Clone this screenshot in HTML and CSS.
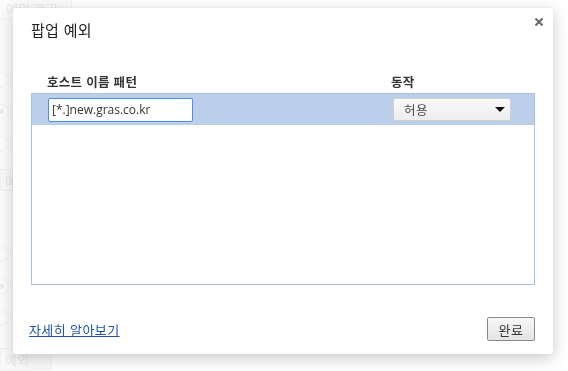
FILE: index.html
```html
<!DOCTYPE html>
<html lang="ko">
<head>
    <meta charset="UTF-8">
    <meta name="viewport" content="width=device-width, initial-scale=1.0">
    <title>팝업 예외</title>
    <link rel="stylesheet" href="styles.css">
</head>
<body>
    <div class="page">
        <div class="page-tab">예외 관리</div>
        <div class="radio-group first">
            <span class="radio"></span>
            <span class="radio checked"></span>
            <span class="radio"></span>
        </div>
        <div class="page-btn">예외</div>
        <div class="radio-group second">
            <span class="radio"></span>
            <span class="radio checked"></span>
            <span class="radio"></span>
        </div>
        <div class="page-btn last">예외</div>
    </div>

    <div class="overlay">
        <div class="dialog">
            <button class="close-btn" aria-label="닫기">
                <svg width="8" height="8" viewBox="0 0 8 8">
                    <path d="M0.5 0.5 L7.5 7.5 M7.5 0.5 L0.5 7.5" stroke="#666" stroke-width="2"/>
                </svg>
            </button>
            <h3 class="dialog-title">팝업 예외</h3>
            <div class="list-head">
                <span class="col-pattern">호스트 이름 패턴</span>
                <span class="col-action">동작</span>
            </div>
            <div class="list">
                <div class="list-row selected">
                    <div class="col-pattern">
                        <input type="text" class="pattern-input" value="[*.]new.gras.co.kr">
                    </div>
                    <div class="col-action">
                        <div class="select">
                            <span>허용</span>
                            <span class="select-arrow"></span>
                        </div>
                    </div>
                </div>
            </div>
            <div class="dialog-footer">
                <a href="#" class="learn-more">자세히 알아보기</a>
                <button class="done-btn">완료</button>
            </div>
        </div>
    </div>
</body>
</html>
```

FILE: styles.css
```css
body {
    margin: 0;
    background: #fff;
    font-family: "Noto Sans CJK KR", "Noto Sans", sans-serif;
    font-size: 12px;
    color: #333;
    overflow: hidden;
}
.page {
    height: 371px;
    color: #cfcfcf;
    background: linear-gradient(to right, #f7f7f7 0, #fff 40px);
}
.page-tab {
    width: 72px;
    height: 20px;
    line-height: 18px;
    padding-left: 6px;
    box-sizing: border-box;
    background: #f6f6f6;
    border-bottom: 1px solid #e6e6e6;
    border-right: 1px solid #e6e6e6;
    font-size: 13px;
}
.radio-group {
    display: flex;
    flex-direction: column;
    gap: 17px;
    margin-left: -6px;
}
.radio-group.first {
    margin-top: 52px;
}
.radio-group.second {
    margin-top: 56px;
}
.radio {
    width: 13px;
    height: 13px;
    border: 1px solid #e2e2e2;
    border-radius: 50%;
    background: #fafafa;
    position: relative;
}
.radio.checked::after {
    content: "";
    position: absolute;
    left: 4px;
    top: 4px;
    width: 5px;
    height: 5px;
    border-radius: 50%;
    background: #d8d8d8;
}
.page-btn {
    width: 52px;
    height: 22px;
    margin-top: 18px;
    line-height: 22px;
    padding-left: 4px;
    box-sizing: border-box;
    border: 1px solid #e2e2e2;
    background: #f6f6f6;
    font-size: 13px;
}
.page-btn.last {
    margin-top: 22px;
}

.overlay {
    position: fixed;
    inset: 0;
    background: rgba(255, 255, 255, 0.55);
}
.dialog {
    position: absolute;
    left: 13px;
    top: 8px;
    width: 540px;
    height: 346px;
    box-sizing: border-box;
    padding: 0 18px 13px;
    background: #fff;
    border-radius: 2px;
    box-shadow: 0 4px 16px rgba(0, 0, 0, 0.22), 0 0 1px rgba(0, 0, 0, 0.15);
    display: flex;
    flex-direction: column;
}
.close-btn {
    position: absolute;
    right: 10px;
    top: 10px;
    width: 8px;
    height: 8px;
    padding: 0;
    border: none;
    background: none;
    display: flex;
}
.dialog-title {
    margin: 12px 0 0;
    font-size: 15px;
    font-weight: normal;
    line-height: 20px;
    color: #222;
    letter-spacing: 0.3px;
}
.list-head {
    display: flex;
    margin-top: 34px;
    line-height: 16px;
    font-weight: bold;
    font-size: 12.5px;
    color: #333;
    letter-spacing: 0.3px;
}
.col-pattern {
    width: 360px;
    padding-left: 16px;
    box-sizing: border-box;
}
.col-action {
    flex: 1;
}
.list {
    margin-top: 3px;
    height: 192px;
    border: 1px solid #a7c3e3;
    box-sizing: border-box;
}
.list-row {
    display: flex;
    align-items: center;
    height: 31px;
}
.list-row.selected {
    background: #bccfea;
}
.list-row .col-pattern {
    padding-left: 16px;
}
.pattern-input {
    width: 145px;
    height: 24px;
    box-sizing: border-box;
    border: 1px solid #4d8fe6;
    border-radius: 2px;
    padding: 0 3px;
    font-family: "Open Sans", "Noto Sans", sans-serif;
    font-size: 12px;
    color: #333;
    outline: none;
}
.select {
    width: 118px;
    height: 23px;
    box-sizing: border-box;
    display: flex;
    align-items: center;
    justify-content: space-between;
    padding: 0 5px 0 10px;
    margin-left: 1px;
    border: 1px solid #cfcfcf;
    border-radius: 2px;
    background: linear-gradient(#fafafa, #ededed);
    color: #444;
    font-size: 12.5px;
    letter-spacing: 0.5px;
}
.select-arrow {
    width: 0;
    height: 0;
    border-left: 5px solid transparent;
    border-right: 5px solid transparent;
    border-top: 5px solid #111;
}
.dialog-footer {
    margin-top: auto;
    display: flex;
    justify-content: space-between;
    align-items: center;
}
.learn-more {
    margin-left: -2px;
    color: #1f55a8;
    font-size: 13px;
    letter-spacing: 0.4px;
}
.done-btn {
    width: 48px;
    height: 24px;
    border: 1px solid #8b8b8b;
    border-radius: 2px;
    background: linear-gradient(#f7f7f7, #e4e4e4);
    font-family: "Noto Sans CJK KR", sans-serif;
    font-size: 13px;
    letter-spacing: 0.5px;
    color: #333;
    padding: 0;
}
```
